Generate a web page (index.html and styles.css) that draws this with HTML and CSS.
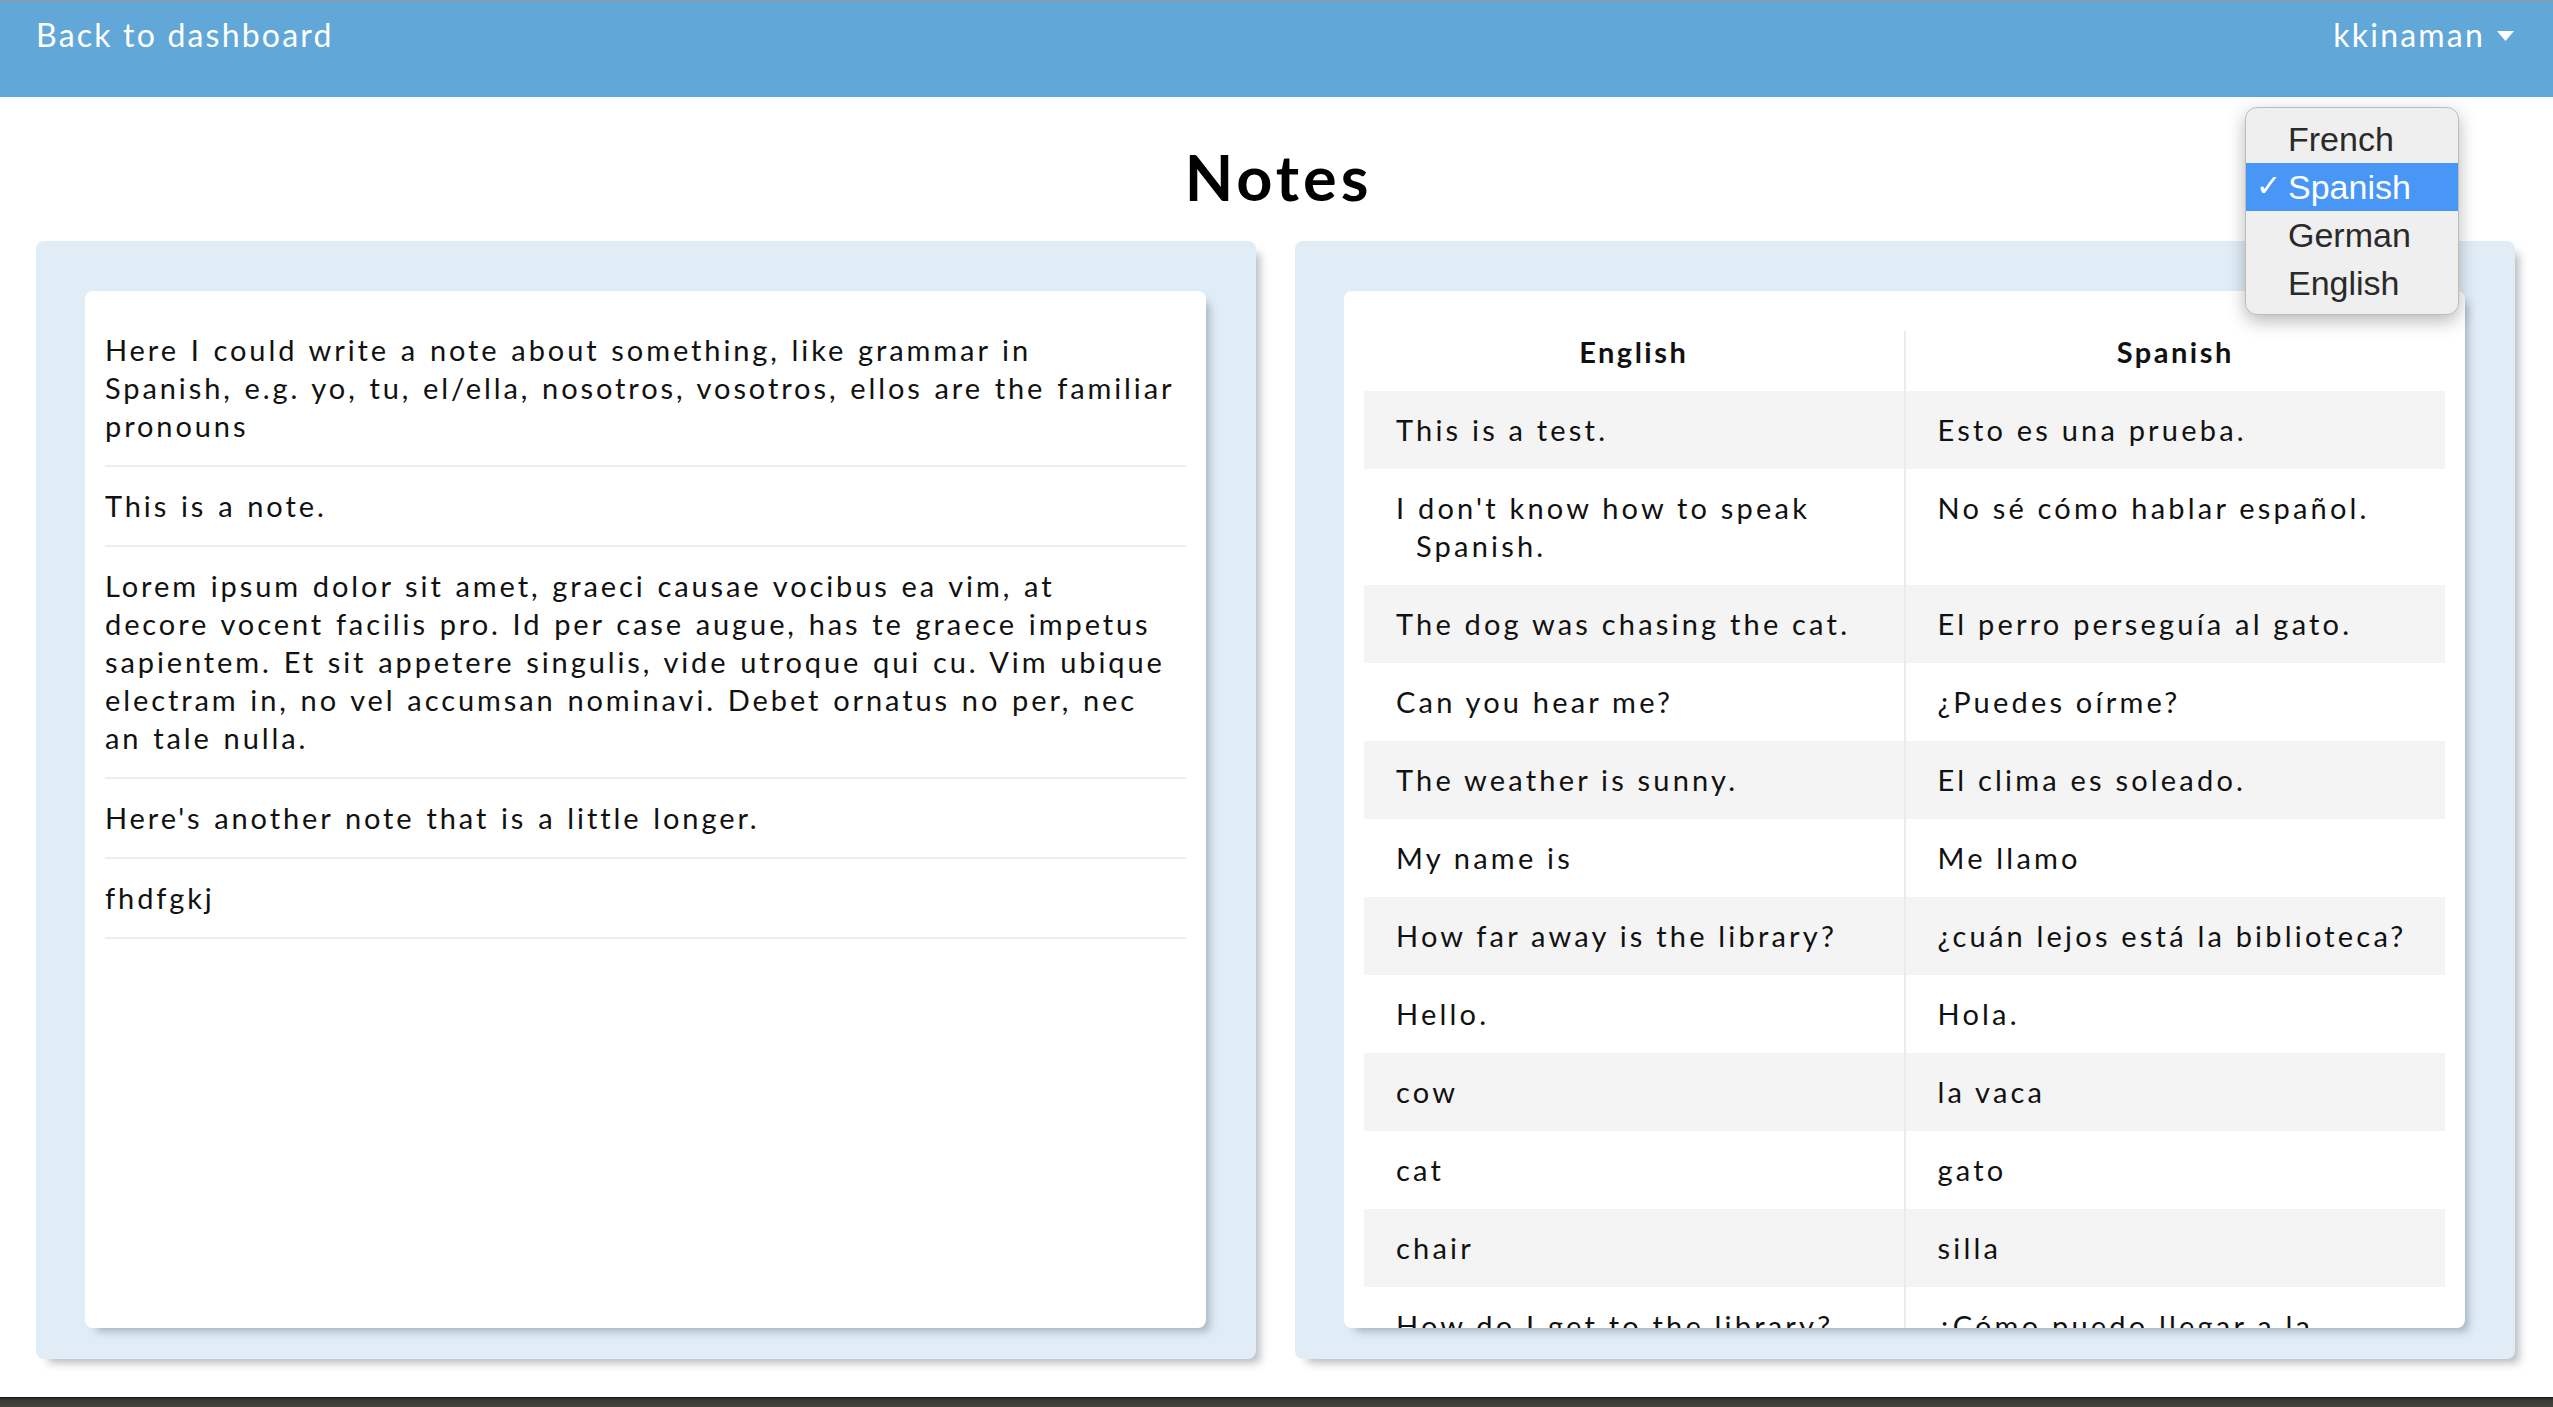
FILE: index.html
```html
<!DOCTYPE html>
<html lang="en">
<head>
<meta charset="utf-8">
<title>Notes</title>
<link rel="stylesheet" href="styles.css">
</head>
<body>
<header class="navbar">
  <a class="back" href="#">Back to dashboard</a>
  <div class="user">kkinaman
    <svg class="caret" width="17" height="10" viewBox="0 0 17 10"><path d="M0 0H17L8.5 10Z" fill="#fff"/></svg>
  </div>
</header>

<div class="lang-menu">
  <div class="opt">French</div>
  <div class="opt sel"><span class="check">✓</span>Spanish</div>
  <div class="opt">German</div>
  <div class="opt">English</div>
</div>

<main class="main">
  <h1 class="title">Notes</h1>
  <div class="panels">
    <section class="panel">
      <div class="card notes">
        <div class="note">Here I could write a note about something, like grammar in<br>Spanish, e.g. yo, tu, el/ella, nosotros, vosotros, ellos are the familiar<br>pronouns</div>
        <div class="note">This is a note.</div>
        <div class="note">Lorem ipsum dolor sit amet, graeci causae vocibus ea vim, at<br>decore vocent facilis pro. Id per case augue, has te graece impetus<br>sapientem. Et sit appetere singulis, vide utroque qui cu. Vim ubique<br>electram in, no vel accumsan nominavi. Debet ornatus no per, nec<br>an tale nulla.</div>
        <div class="note">Here's another note that is a little longer.</div>
        <div class="note">fhdfgkj</div>
      </div>
    </section>
    <section class="panel">
      <div class="card vocab">
        <table class="vocab-table">
          <thead>
            <tr><th>English</th><th>Spanish</th></tr>
          </thead>
          <tbody>
            <tr><td>This is a test.</td><td>Esto es una prueba.</td></tr>
            <tr><td>I don't know how to speak<br><span class="hang">Spanish.</span></td><td>No sé cómo hablar español.</td></tr>
            <tr><td>The dog was chasing the cat.</td><td>El perro perseguía al gato.</td></tr>
            <tr><td>Can you hear me?</td><td>¿Puedes oírme?</td></tr>
            <tr><td>The weather is sunny.</td><td>El clima es soleado.</td></tr>
            <tr><td>My name is</td><td>Me llamo</td></tr>
            <tr><td>How far away is the library?</td><td>¿cuán lejos está la biblioteca?</td></tr>
            <tr><td>Hello.</td><td>Hola.</td></tr>
            <tr><td>cow</td><td>la vaca</td></tr>
            <tr><td>cat</td><td>gato</td></tr>
            <tr><td>chair</td><td>silla</td></tr>
            <tr><td>How do I get to the library?</td><td>¿Cómo puedo llegar a la biblioteca?</td></tr>
          </tbody>
        </table>
      </div>
    </section>
  </div>
</main>
<div class="desk"></div>
</body>
</html>
```
FILE: styles.css
```css
* { box-sizing: border-box; }
html, body { margin: 0; padding: 0; }
body {
  width: 2553px;
  height: 1407px;
  overflow: hidden;
  position: relative;
  display: flex;
  flex-direction: column;
  background: #ffffff;
  color: #111111;
  font-family: Lato, "Open Sans", sans-serif;
}

/* navbar */
.navbar {
  flex: none;
  height: 97px;
  border-top: 1px solid #9a9a9a;
  background: #61a8d8;
  display: flex;
  justify-content: space-between;
  align-items: flex-start;
  padding: 14px 39px 0 36px;
  color: #ffffff;
  font-size: 32px;
  line-height: 40px;
  letter-spacing: 2.2px;
}
.back { color: #ffffff; text-decoration: none; }
.user { display: flex; align-items: center; gap: 12px; }
.caret { margin-top: 2px; }

/* dropdown */
.lang-menu {
  position: absolute;
  left: 2245px;
  top: 107px;
  width: 214px;
  padding: 7px 0;
  background: #efefef;
  border: 1px solid #bcbcbc;
  border-radius: 12px;
  box-shadow: 0 6px 18px rgba(0, 0, 0, 0.28);
  font-family: "Liberation Sans", Arial, sans-serif;
  font-size: 34px;
  color: #2a2a2a;
  z-index: 5;
}
.opt { position: relative; height: 48px; line-height: 48px; padding-left: 42px; }
.opt.sel { background: #4897f6; color: #ffffff; }
.check { position: absolute; left: 10px; top: -1px; font-family: "DejaVu Sans", sans-serif; font-size: 30px; }

/* main */
.main { flex: 1; display: flex; flex-direction: column; }
.title {
  margin: 48px 0 33px;
  padding-left: 4px;
  text-align: center;
  font-size: 63px;
  line-height: 63px;
  font-weight: 700;
  letter-spacing: 4px;
  color: #000000;
}
.panels { display: flex; gap: 39px; padding: 0 38px 0 36px; }
.panel {
  flex: 1;
  height: 1118px;
  background: #e0edf7;
  border-radius: 8px;
  padding: 50px 50px 31px 49px;
  box-shadow: 8px 8px 8px -4px rgba(50, 60, 75, 0.35);
}
.card {
  height: 100%;
  background: #ffffff;
  border-radius: 8px;
  overflow: hidden;
  box-shadow: 7px 7px 8px -4px rgba(50, 60, 75, 0.35);
}

/* notes */
.notes {
  padding: 20px;
  font-size: 29px;
  line-height: 38px;
  letter-spacing: 2.9px;
  word-spacing: 1.5px;
}
.note { padding: 20px 0; border-bottom: 2px solid #ededed; }

/* vocab table */
.vocab { padding: 40px 20px 0; }
.vocab-table {
  width: 100%;
  border-collapse: collapse;
  table-layout: fixed;
  font-size: 29px;
  line-height: 38px;
  letter-spacing: 3.2px;
}
.vocab-table th {
  font-weight: 700;
  letter-spacing: 2.5px;
  padding: 2px 20px 20px;
  text-align: center;
}
.vocab-table td { padding: 20px 32px; vertical-align: top; text-align: left; }
.vocab-table th + th,
.vocab-table td + td { border-left: 2px solid #ebebeb; }
.vocab-table tbody tr:nth-child(odd) { background: #f4f4f4; }
.hang { padding-left: 20px; }

.desk {
  flex: none;
  height: 10px;
  background: linear-gradient(#161616, #3b3a35 30%, #46443e);
}
```
